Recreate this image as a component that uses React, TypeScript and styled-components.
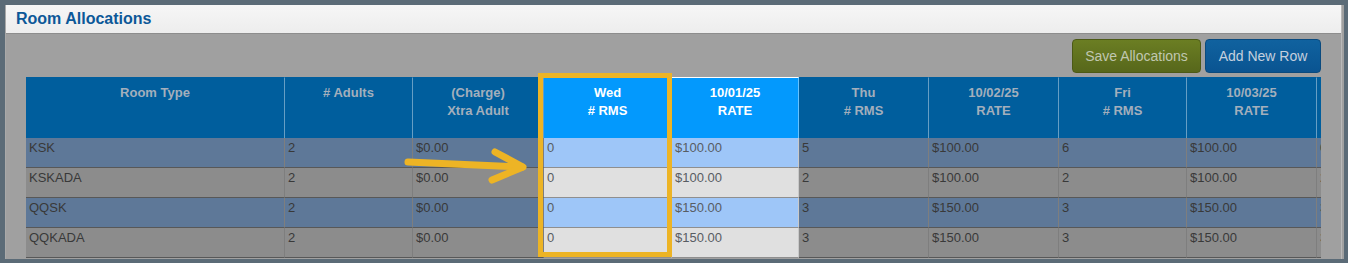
import React from "react";
import styled, { createGlobalStyle } from "styled-components";

const GlobalStyle = createGlobalStyle`
  html, body { margin: 0; padding: 0; }
  body {
    background: #5b6b77;
    font-family: "Liberation Sans", Arial, Helvetica, sans-serif;
  }
`;

const Page = styled.div`
  position: relative;
  width: 1348px;
  height: 263px;
  padding: 5px 4px 0 5px;
  box-sizing: border-box;
  overflow: hidden;
`;

const Dialog = styled.div`
  height: 254px;
  background: #a0a0a0;
  border-left: 1px solid #a9a9a9;
  padding-right: 2px;
  overflow: hidden;
`;

const Inner = styled.div`
  height: 100%;
  display: flex;
  flex-direction: column;
  border-right: 1px solid #b9b9b9;
`;

const TitleBar = styled.div`
  height: 28px;
  flex: none;
  border-bottom: 1px solid #8d8d8d;
  background: linear-gradient(#f6f6f6, #ededed);
  padding-left: 10px;
  font-size: 16px;
  font-weight: bold;
  line-height: 28px;
  color: #0c5898;
`;

const Body = styled.div`
  padding: 5px 20px 0 20px;
  min-width: 0;
`;

const Toolbar = styled.div`
  display: flex;
  justify-content: flex-end;
  gap: 4px;
  margin-bottom: 4px;
`;

const Button = styled.button<{ $variant: "save" | "add"; $width: number }>`
  width: ${(p) => p.$width}px;
  height: 34px;
  padding: 0;
  border-radius: 4px;
  font-family: inherit;
  font-size: 14px;
  text-align: center;
  border: 1px solid ${(p) => (p.$variant === "save" ? "#4c5a16" : "#0a4a7e")};
  background: ${(p) =>
    p.$variant === "save"
      ? "linear-gradient(#6b7e23, #57671b)"
      : "linear-gradient(#10629f, #0a5491)"};
  color: ${(p) => (p.$variant === "save" ? "#c0c7b0" : "#c4d0de")};
`;

const TableWrap = styled.div`
  width: 100%;
  overflow: hidden;
`;

const Table = styled.table`
  table-layout: fixed;
  width: 1321px;
  border-collapse: separate;
  border-spacing: 0;
`;

const HeadCell = styled.th<{ $lit?: boolean }>`
  box-sizing: border-box;
  height: 61px;
  padding: 6px 4px 0;
  vertical-align: top;
  text-align: center;
  font-size: 13px;
  font-weight: bold;
  line-height: 18px;
  white-space: nowrap;
  overflow: hidden;
  border-top: 1px solid ${(p) => (p.$lit ? "#ffffff" : "transparent")};
  border-right: 1px solid rgba(255, 255, 255, 0.4);
  background: ${(p) => (p.$lit ? "#0399fd" : "#005e9d")};
  color: ${(p) => (p.$lit ? "#ffffff" : "#a3afbc")};
`;

const Cell = styled.td<{ $lit?: boolean; $alt: boolean }>`
  box-sizing: border-box;
  height: 30px;
  padding: 2px 2px 0 3px;
  vertical-align: top;
  font-size: 13px;
  line-height: 16px;
  white-space: nowrap;
  overflow: hidden;
  border-right: 1px solid ${(p) => (p.$lit ? "#c9c9c9" : "#7e7e7e")};
  border-bottom: 1px solid ${(p) => (p.$lit ? "#8f8f8f" : "#585858")};
  background: ${(p) =>
    p.$alt
      ? p.$lit
        ? "#e0e0e0"
        : "#8c8c8c"
      : p.$lit
      ? "#9ec6f8"
      : "#5e7898"};
  color: ${(p) => (p.$lit ? "#585d63" : "#393939")};
`;

const HighlightBox = styled.div`
  position: absolute;
  left: 538px;
  top: 73px;
  width: 134px;
  height: 184px;
  box-sizing: border-box;
  border: 5px solid #edb425;
  pointer-events: none;
`;

const ArrowSvg = styled.svg`
  position: absolute;
  left: 400px;
  top: 140px;
  overflow: visible;
  pointer-events: none;
`;

type Col = { top: string; bottom?: string; width: number; lit?: boolean };

const columns: Col[] = [
  { top: "Room Type", width: 259 },
  { top: "# Adults", width: 128 },
  { top: "(Charge)", bottom: "Xtra Adult", width: 131 },
  { top: "Wed", bottom: "# RMS", width: 128, lit: true },
  { top: "10/01/25", bottom: "RATE", width: 127, lit: true },
  { top: "Thu", bottom: "# RMS", width: 130 },
  { top: "10/02/25", bottom: "RATE", width: 130 },
  { top: "Fri", bottom: "# RMS", width: 128 },
  { top: "10/03/25", bottom: "RATE", width: 130 },
  { top: "", width: 130 },
];

const rows: string[][] = [
  ["KSK", "2", "$0.00", "0", "$100.00", "5", "$100.00", "6", "$100.00", "0"],
  ["KSKADA", "2", "$0.00", "0", "$100.00", "2", "$100.00", "2", "$100.00", "2"],
  ["QQSK", "2", "$0.00", "0", "$150.00", "3", "$150.00", "3", "$150.00", "3"],
  ["QQKADA", "2", "$0.00", "0", "$150.00", "3", "$150.00", "3", "$150.00", "3"],
];

export default function App() {
  return (
    <>
      <GlobalStyle />
      <Page>
        <Dialog>
          <Inner>
            <TitleBar>Room Allocations</TitleBar>
            <Body>
              <Toolbar>
                <Button $variant="save" $width={129}>Save Allocations</Button>
                <Button $variant="add" $width={116}>Add New Row</Button>
              </Toolbar>
              <TableWrap>
                <Table>
                  <colgroup>
                    {columns.map((c, i) => (
                      <col key={i} style={{ width: c.width }} />
                    ))}
                  </colgroup>
                  <thead>
                    <tr>
                      {columns.map((c, i) => (
                        <HeadCell key={i} $lit={c.lit}>
                          {c.top}
                          {c.bottom && (
                            <>
                              <br />
                              {c.bottom}
                            </>
                          )}
                        </HeadCell>
                      ))}
                    </tr>
                  </thead>
                  <tbody>
                    {rows.map((r, ri) => (
                      <tr key={ri}>
                        {r.map((v, ci) => (
                          <Cell key={ci} $lit={columns[ci].lit} $alt={ri % 2 === 1}>
                            {v}
                          </Cell>
                        ))}
                      </tr>
                    ))}
                  </tbody>
                </Table>
              </TableWrap>
            </Body>
          </Inner>
        </Dialog>
        <HighlightBox />
        <ArrowSvg width="130" height="45" viewBox="0 0 130 45">
          <g
            fill="none"
            stroke="#edb425"
            strokeWidth="7"
            strokeLinecap="round"
            strokeLinejoin="round"
          >
            <path d="M8 22 L122 27" />
            <path d="M95 12 L123 27 L92 40" />
          </g>
        </ArrowSvg>
      </Page>
    </>
  );
}
